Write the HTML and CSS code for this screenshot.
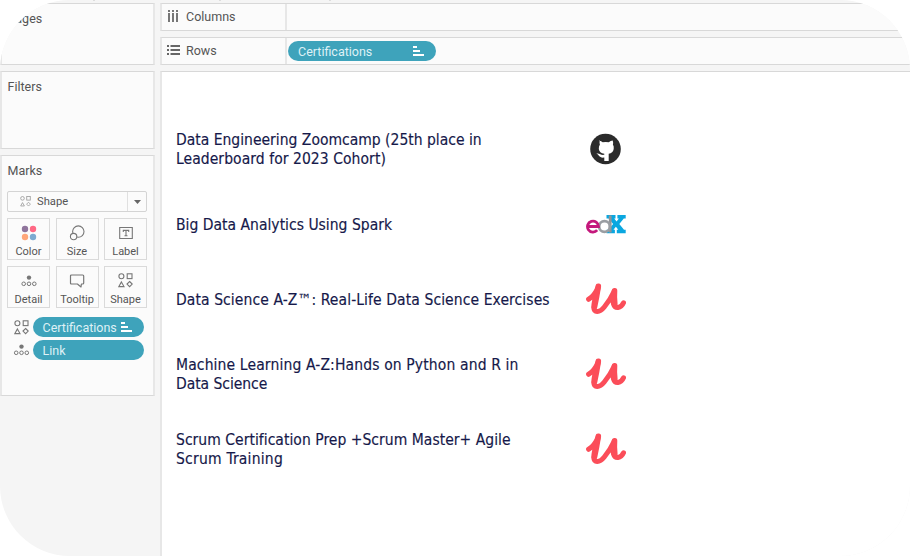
FILE: index.html
```
<!DOCTYPE html>
<html lang="en">
<head>
<meta charset="utf-8">
<title>Certifications</title>
<link rel="stylesheet" href="styles.css">
</head>
<body>
<svg width="0" height="0" class="defs">
  <symbol id="shapes" viewBox="0 0 15 15">
    <g fill="none" stroke="currentColor" stroke-width="1.1"><circle cx="3.4" cy="3.2" r="2.5"/><rect x="9.2" y=".8" width="4.8" height="4.8"/><path d="M3.4 9 6 13.6H.9zM11.6 8.5l2.6 2.6-2.6 2.6L9 11.1z"/></g>
  </symbol>
  <symbol id="detail" viewBox="0 0 16 12">
    <circle cx="8" cy="2.6" r="2.2" fill="currentColor"/>
    <g fill="none" stroke="currentColor"><circle cx="2.7" cy="8.8" r="1.8"/><circle cx="8" cy="8.8" r="1.8"/><circle cx="13.3" cy="8.8" r="1.8"/></g>
  </symbol>
  <symbol id="sort" viewBox="0 0 11 10">
    <path fill="currentColor" d="M0 0h4v2H0zM0 4h7v2H0zM0 8h11v2H0z"/>
  </symbol>
  <symbol id="udemy" viewBox="0 0 40 34">
    <path fill="none" stroke="#fb4d59" stroke-width="5" stroke-linecap="round" stroke-linejoin="round" d="M2.600 17.300C6.800 15 9.500 11.500 12.500 4.500C11 12 7.600 18.500 7.800 25.500C8 31 13.500 31 18.300 25C22.500 20 25.500 15 28.300 9C26.500 15 26.500 18 27.500 22C29 27 35 26.500 37.500 20.800"/>
    <path fill="none" stroke="#fb4d59" stroke-width="5.600" stroke-linecap="round" d="M12.300 4.300Q10.500 16 8.500 25M28.500 8.800Q28 15 28.800 22"/>
  </symbol>
</svg>
<div class="app">
  <div class="ticks"><i></i><i></i><i></i></div>
  <aside class="side">
    <section class="card pages"><h2>Pages</h2></section>
    <section class="card filters"><h2>Filters</h2></section>
    <section class="card marks">
      <h2>Marks</h2>
      <div class="select">
        <svg class="sel-icon" width="11" height="11"><use href="#shapes"/></svg>
        <span>Shape</span>
        <b><svg width="7" height="4" viewBox="0 0 7 4"><path d="M0 0h7L3.500 4z" fill="#666"/></svg></b>
      </div>
      <div class="grid">
        <div class="btn"><svg width="16" height="16" viewBox="0 0 16 16"><circle cx="4" cy="4" r="3.200" fill="#8f749c"/><circle cx="12" cy="4" r="3.200" fill="#ff6985"/><circle cx="4" cy="12" r="3.200" fill="#ffa679"/><circle cx="12" cy="12" r="3.200" fill="#7daad0"/></svg><span>Color</span></div>
        <div class="btn"><svg width="16" height="16" viewBox="0 0 16 16"><g fill="#fbfbfb" stroke="#777" stroke-width="1.100"><circle cx="9.300" cy="6.600" r="5.700"/><circle cx="4.600" cy="11.600" r="3.200"/></g></svg><span>Size</span></div>
        <div class="btn"><svg width="16" height="16" viewBox="0 0 16 16"><path fill="none" stroke="#777" stroke-width="1.100" d="M1.700 2.500h12.600v11H1.700zM5.300 7V5.400h5.400V7M8 5.400v5.300M6.500 10.700h3"/></svg><span>Label</span></div>
        <div class="btn"><svg class="low" width="16" height="12"><use href="#detail"/></svg><span>Detail</span></div>
        <div class="btn"><svg width="16" height="16" viewBox="0 0 16 16"><path fill="none" stroke="#777" stroke-width="1.200" stroke-linejoin="round" d="M2.500 2h11.200q1 0 1 1v7q0 1-1 1h-1.300l-.4 3-3.600-3H2.500q-1 0-1-1V3q0-1 1-1z"/></svg><span>Tooltip</span></div>
        <div class="btn"><svg width="15" height="15"><use href="#shapes"/></svg><span>Shape</span></div>
      </div>
      <div class="mark-row"><svg width="15" height="15"><use href="#shapes"/></svg><div class="pill">Certifications<svg width="11" height="10"><use href="#sort"/></svg></div></div>
      <div class="mark-row"><svg width="17" height="12"><use href="#detail"/></svg><div class="pill">Link</div></div>
    </section>
  </aside>
  <main class="main">
    <div class="shelf">
      <div class="shelf-name"><svg width="13" height="13" viewBox="0 0 13 13"><path fill="#777" d="M1 0h2v2H1zM5 0h2v2H5zM9 0h2v2H9zM1 3h2v9H1zM5 3h2v9H5zM9 3h2v9H9z"/></svg>Columns</div>
    </div>
    <div class="shelf">
      <div class="shelf-name"><svg width="13" height="13" viewBox="0 0 13 13"><path fill="#666" d="M0 1h2v2H0zM0 5h2v2H0zM0 9h2v2H0zM3.500 1H13v2H3.500zM3.500 5H13v2H3.500zM3.500 9H13v2H3.500z"/></svg>Rows</div>
      <div class="pill wide">Certifications<svg width="11" height="10"><use href="#sort"/></svg></div>
    </div>
    <div class="view">
      <div class="row"><p><span class="l1">Data Engineering Zoomcamp (25th place in</span><br><span class="l2">Leaderboard for 2023 Cohort)</span></p>
        <svg class="logo" width="40" height="34" viewBox="0 0 40 34"><circle cx="19.500" cy="17" r="15.300" fill="#2b2b2b"/><path fill="#fff" d="M12.700 8.400q2 .2 4 1.900 3-.6 6 0 2-1.700 4-1.900.8 2.300.2 4.200 1.200 1.700.8 4.300-.8 4.200-5 4.900v7.300h-4.400v-3.500c-5.500.7-5-2.900-8-4 3.500-.9 4.200 2 8 1.200v-1q-5-.8-5.500-4.900-.1-2.600 1.100-4.300-.6-1.900-.2-4.200z"/></svg></div>
      <div class="row single"><p><span class="l3">Big Data Analytics Using Spark</span></p>
        <svg class="logo" width="40" height="34" viewBox="0 0 40 34"><path fill="#0aa7e0" d="M20.500 8h9v3.600h-1.300l2.400 3 2.300-3h-1.500V8h8.300v3.600h-1.900l-4.500 5.400 4.700 5.700h1.700v3.600h-8.900v-3.600h1.500l-2.400-3-2.500 3h1.500v3.600h-8.400v-3.600h2l4.600-5.700-4.500-5.400h-2.100z"/><g fill="none" stroke-width="2.800"><path stroke="#8f9499" d="M24.200 8.500v17"/><circle cx="18.500" cy="19.500" r="5.400" stroke="#9a9ea3"/><path stroke="#c4187c" d="M2 19.500h10.500a5.500 5.500 0 1 0-1.300 3.700"/></g></svg></div>
      <div class="row single"><p><span class="l4">Data Science A-Z™: Real-Life Data Science Exercises</span></p><svg class="logo" width="40" height="34"><use href="#udemy"/></svg></div>
      <div class="row"><p><span class="l5">Machine Learning A-Z:Hands on Python and R in</span><br><span class="l6">Data Science</span></p><svg class="logo" width="40" height="34"><use href="#udemy"/></svg></div>
      <div class="row"><p><span class="l7">Scrum Certification Prep +Scrum Master+ Agile</span><br><span class="l8">Scrum Training</span></p><svg class="logo" width="40" height="34"><use href="#udemy"/></svg></div>
    </div>
  </main>
</div>
</body>
</html>
```

FILE: styles.css
```
* { box-sizing: border-box; }
body { margin: 0; background: #fff; font-family: Roboto, "Liberation Sans", sans-serif; font-size: 12px; color: #555; }
.defs { position: absolute; }
svg { display: block; flex: none; }
.app { position: relative; display: flex; gap: 5px; width: 910px; height: 556px; padding-top: 3px; background: #f5f5f5; border-radius: 70px; overflow: hidden; }
.ticks { position: absolute; top: 0; left: 93px; display: flex; }
.ticks i { width: 2px; height: 1px; margin-right: 124px; background: #ddd; }
.ticks i + i { margin-right: 108px; }
.side { display: flex; flex-direction: column; gap: 6px; width: 155px; flex: none; }
.card { border: 1px solid #d8d8d8; border-left: 2px solid #e7e7e7; border-right: 2px solid #e7e7e7; background: #fbfbfb; padding: 7px 5px 0 5px; }
h2 { margin: 0; padding-left: .5px; font-size: 12.5px; line-height: 15px; font-weight: 400; }
.pages { height: 62px; }
.filters { height: 78px; }
.marks { height: 241px; }
.marks h2 { margin-bottom: 13px; }
.select { display: flex; align-items: center; height: 21px; width: 140px; border: 1px solid #d4d4d4; border-radius: 2px; padding-left: 12px; }
.select span { margin-left: 6px; font-size: 11.2px; }
.select b { margin-left: auto; width: 19px; height: 19px; border-left: 1px solid #e0e0e0; display: flex; align-items: center; justify-content: center; }
.sel-icon { color: #999; }
.grid { display: grid; grid-template-columns: repeat(3, 43px); gap: 6px 5.500px; margin-top: 6px; color: #777; }
.btn { height: 42px; border: 1px solid #dadada; display: flex; flex-direction: column; align-items: center; position: relative; padding-top: 6px; }
.btn .low { margin-top: 2px; }
.btn span { position: absolute; bottom: 0; font-size: 11px; line-height: 14px; color: #555; }
.mark-row { display: flex; align-items: center; gap: 4px; height: 20px; margin: 9px 0 0 6.500px; color: #777; }
.mark-row + .mark-row { margin-top: 3px; margin-left: 5.500px; gap: 3px; }
.pill { display: flex; align-items: center; height: 20px; width: 111px; padding-left: 10px; border-radius: 10px; background: #3ea3bb; color: #dff1f6; font-size: 12.500px; }
.pill svg { margin-left: 4px; color: #fff; }
.wide { width: 148px; margin-left: 1px; padding-right: 12px; justify-content: space-between; }
.main { flex: 1; display: flex; flex-direction: column; gap: 6px; }
.shelf { height: 28px; border: 1px solid #d8d8d8; border-left: 2px solid #e7e7e7; border-right: 0; background: #fbfbfb; display: flex; align-items: center; }
.shelf-name { width: 125px; height: 26px; border-right: 2px solid #e7e7e7; display: flex; align-items: center; gap: 6px; padding: 0 0 1px 5px; font-size: 12.500px; }
.view { flex: 1; border-top: 1px solid #d8d8d8; border-left: 2px solid #e7e7e7; background: #fff; padding: 40px 0 0 14px; }
.row { display: flex; align-items: center; height: 75px; }
.row p { width: 410px; margin: 0; font-family: "DejaVu Sans Condensed", "DejaVu Sans", sans-serif; font-stretch: condensed; font-size: 15.500px; line-height: 19px; color: #16194a; -webkit-text-stroke: .15px #16194a; white-space: nowrap; }
.single p { padding-top: 2px; }
.l2 { letter-spacing: .06px; }
.l3 { letter-spacing: .01px; }
.l4 { letter-spacing: .09px; }
.l5 { letter-spacing: .13px; }
.l6 { letter-spacing: -.05px; }
.l7 { letter-spacing: .03px; }
.l8 { letter-spacing: .22px; }
.logo { margin-top: -1px; }
```
